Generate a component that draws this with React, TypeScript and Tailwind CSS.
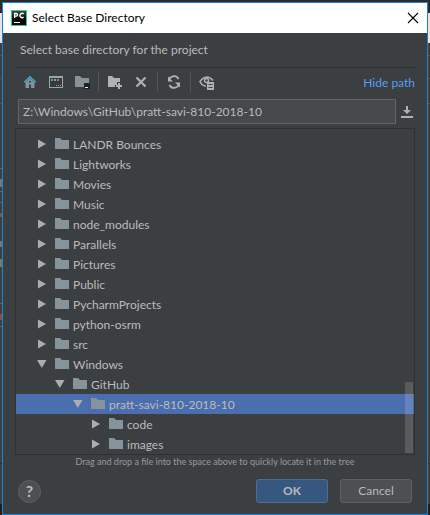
import React from "react";

type Node = { name: string; depth: number; open?: boolean; selected?: boolean };

const nodes: Node[] = [
  { name: "LANDR Bounces", depth: 0 },
  { name: "Lightworks", depth: 0 },
  { name: "Movies", depth: 0 },
  { name: "Music", depth: 0 },
  { name: "node_modules", depth: 0 },
  { name: "Parallels", depth: 0 },
  { name: "Pictures", depth: 0 },
  { name: "Public", depth: 0 },
  { name: "PycharmProjects", depth: 0 },
  { name: "python-osrm", depth: 0 },
  { name: "src", depth: 0 },
  { name: "Windows", depth: 0, open: true },
  { name: "GitHub", depth: 1, open: true },
  { name: "pratt-savi-810-2018-10", depth: 2, open: true, selected: true },
  { name: "code", depth: 3 },
  { name: "images", depth: 3 },
];

const indents = ["pl-5", "pl-[38px]", "pl-14", "pl-[74px]"];

function Folder() {
  return (
    <svg width="14" height="12" viewBox="0 0 14 12" className="mr-1 shrink-0" aria-hidden="true">
      <path d="M0 0h5l2 2h7v9H0z" fill="#87939a" />
    </svg>
  );
}

function Arrow({ open }: { open?: boolean }) {
  return (
    <svg width="10" height="10" viewBox="0 0 10 10" className="shrink-0" aria-hidden="true">
      <path d={open ? "M0 1h9.5L4.8 9z" : "M1 0.5v9L9 5z"} fill="#adadad" />
    </svg>
  );
}

function TreeRow({ node }: { node: Node }) {
  return (
    <li
      role="treeitem"
      aria-expanded={!!node.open}
      aria-selected={!!node.selected}
      className={`flex h-5 items-center ${indents[node.depth]} ${node.selected ? "bg-[#4b6eaf]" : ""}`}
    >
      <span className="mr-2 flex w-[11px] justify-center">
        <Arrow open={node.open} />
      </span>
      <Folder />
      <span className="pt-0.5 whitespace-nowrap">{node.name}</span>
    </li>
  );
}

function Tool({ label, children }: { label: string; children: React.ReactNode }) {
  return (
    <button type="button" aria-label={label} className="flex h-5 w-[26px] items-center justify-center">
      <svg width="16" height="16" viewBox="0 0 16 16" aria-hidden="true">
        {children}
      </svg>
    </button>
  );
}

function Divider() {
  return <span className="mx-[3px] h-5 w-px bg-[#555555]" />;
}

function Backdrop({ left }: { left?: boolean }) {
  return (
    <div className="flex w-0.5 shrink-0 flex-col bg-[#3c3f41]" aria-hidden="true">
      <div className="h-[13px] bg-[#2b2b2b]" />
      <div className="h-[30px] bg-[#e4e4e4]" />
      <div className="h-3" />
      <div className="h-px bg-[#555555]" />
      <div className="h-[22px]" />
      <div className="h-px bg-[#555555]" />
      <div className="h-6" />
      <div className="h-px bg-[#555555]" />
      {left && (
        <>
          <div className="h-16" />
          <div className="h-px bg-[#666666]" />
          <div className="h-2.5" />
          <div className="h-2 bg-[#777777]" />
          <div className="h-1" />
          <div className="h-px bg-[#666666]" />
          <div className="h-2.5" />
          <div className="h-px bg-[#666666]" />
          <div className="h-2.5" />
          <div className="h-1 bg-[#7a5548]" />
          <div className="h-6" />
          <div className="h-1.5 bg-[#777777]" />
          <div className="h-3" />
          <div className="h-2 bg-[#6f8068]" />
          <div className="h-9" />
          <div className="h-px bg-[#666666]" />
          <div className="h-2.5" />
          <div className="h-1.5 bg-[#7a5548]" />
          <div className="h-1.5" />
          <div className="h-px bg-[#666666]" />
        </>
      )}
      <div className="grow" />
      <div className="h-px bg-[#2b2b2b]" />
      <div className="h-10" />
      <div className="h-[11px] bg-[#1e1e1e]" />
    </div>
  );
}

export default function App() {
  return (
    <div className="flex min-h-screen bg-[#2b2b2b] font-['Lato','Noto_Sans',sans-serif] text-xs text-[#bbbbbb]">
      <Backdrop left />
      <main className="mt-0.5 flex min-w-0 grow flex-col border border-[#1883d7] bg-[#3c3f41]">
        <header className="flex h-[30px] items-center bg-white pr-2 pl-2 text-black">
          <svg width="16" height="16" viewBox="0 0 16 16" aria-hidden="true">
            <defs>
              <linearGradient id="logo" x1="0" y1="0" x2="0" y2="1">
                <stop offset="0" stopColor="#454545" />
                <stop offset="0.6" stopColor="#050505" />
              </linearGradient>
            </defs>
            <rect width="16" height="16" fill="#21d789" />
            <rect x="1" y="1" width="14" height="14" fill="url(#logo)" />
            <path d="M3.600 8V3.500h1.600a1.300 1.300 0 0 1 0 2.700H3.600M12.600 4a2.100 2.100 0 1 0 0 3" fill="none" stroke="#fff" strokeWidth="1.300" />
            <path d="M3 12h6v1H3z" fill="#fff" />
          </svg>
          <h1 className="ml-[5px] grow">Select Base Directory</h1>
          <button type="button" aria-label="Close">
            <svg width="12" height="12" viewBox="0 0 12 12" aria-hidden="true">
              <path d="M1 1l10 10M11 1L1 11" stroke="#000" strokeWidth="1.1" />
            </svg>
          </button>
        </header>

        <div className="flex grow flex-col px-3">
          <p className="flex h-[34px] items-center pl-[5px]">Select base directory for the project</p>
          <div className="h-px bg-[#2b2d2e]" />

          <div className="mt-1 flex h-5 items-center pl-0.5">
            <Tool label="Home directory">
              <path d="M8 4.200L3.500 8.500V14H7v-3.500h2V14h3.500V8.500z" fill="#87939a" />
              <path d="M2.200 8.300L8 3l5.800 5.300" fill="none" stroke="#3e9fca" strokeWidth="1.700" />
              <path d="M7 7h2v1.500H7z" fill="#3c3f41" />
            </Tool>
            <Tool label="Project directory">
              <path d="M1 2h14v12H1z" fill="#9aa7b0" />
              <path d="M2 4h12v9H2z" fill="#363a3c" />
              <path d="M3 5h2v2H3z" fill="#62b543" />
              <path d="M6 5h2v2H6z" fill="#40b6e0" />
              <path d="M9 5h2v2H9z" fill="#f26522" />
              <path d="M8 11h1v1H8zM10 11h1v1h-1zM12 11h1v1h-1z" fill="#9aa7b0" />
            </Tool>
            <Tool label="Module directory">
              <path d="M1 2h5l2 2h7v9H1z" fill="#87939a" />
              <path d="M10 9h6v6h-6z" fill="#1f2122" />
              <path d="M11 13h3v1h-3z" fill="#fff" />
            </Tool>
            <Divider />
            <Tool label="New folder">
              <path d="M1 2h4l2 2h6v4h-3v3H8v2H1z" fill="#afb1b3" />
              <path d="M11 9h2v2h2v2h-2v2h-2v-2H9v-2h2z" fill="#afb1b3" />
            </Tool>
            <Tool label="Delete">
              <path d="M3.500 3.500l9 9M12.500 3.500l-9 9" stroke="#afb1b3" strokeWidth="2.200" />
            </Tool>
            <Divider />
            <Tool label="Refresh">
              <path d="M3 7a5 5 0 0 1 9.500-2M13 9a5 5 0 0 1-9.500 2" fill="none" stroke="#afb1b3" strokeWidth="1.800" />
              <path d="M2 2.500V7.500h5zM14 13.500V8.500H9z" fill="#afb1b3" />
            </Tool>
            <Divider />
            <Tool label="Show hidden files">
              <path d="M7 12.200Q2.500 11.500 1 7.500Q7.500-1 14 6.500" fill="none" stroke="#afb1b3" strokeWidth="1.500" />
              <circle cx="7.500" cy="6.500" r="2" fill="none" stroke="#afb1b3" strokeWidth="1.500" />
              <path d="M8 8h7v8H8z" fill="#afb1b3" />
              <path d="M9.500 10.500h4M9.500 13.500h4" stroke="#3c3f41" />
            </Tool>
            <a href="#path" className="ml-auto pt-0.5 text-[#589df6]">Hide path</a>
          </div>

          <div className="mt-[7px] flex h-[25px] items-center pr-0.5 pl-[3px]">
            <input
              aria-label="Path"
              defaultValue="Z:\Windows\GitHub\pratt-savi-810-2018-10"
              className="h-[25px] min-w-0 grow border border-[#646464] bg-[#45494a] px-1 text-[#bbbbbb] outline-none"
            />
            <button type="button" aria-label="Path history" className="ml-[5px]">
              <svg width="12" height="12" viewBox="0 0 12 12" aria-hidden="true">
                <path d="M5 0h2v4h3L6 8 2 4h3zM0 10h12v2H0z" fill="#afb1b3" />
              </svg>
            </button>
          </div>

          <div className="relative mt-1 border border-[#2e3133] pt-[5px]">
            <ul role="tree" aria-label="Directories">
              {nodes.map((n) => (
                <TreeRow key={n.name} node={n} />
              ))}
            </ul>
            <div className="absolute right-px bottom-px h-[71px] w-2 bg-white/15" />
          </div>

          <p className="text-center text-[9px] leading-[14px] text-[#999999]">
            Drag and drop a file into the space above to quickly locate it in the tree
          </p>

          <footer className="mt-2.5 flex items-center pr-[3px] pb-2.5 pl-[3px]">
            <button
              type="button"
              aria-label="Help"
              className="mr-auto flex size-[23px] items-center justify-center rounded-full border border-[#5e6060] bg-[#4c5052] text-base font-bold"
            >
              ?
            </button>
            <button type="button" className="h-6 w-[72px] rounded-[3px] border border-[#4c708c] bg-[#365880] font-bold">
              OK
            </button>
            <button type="button" className="ml-3 h-6 w-[72px] rounded-[3px] border border-[#5e6060] bg-[#4c5052]">
              Cancel
            </button>
          </footer>
        </div>
      </main>
      <Backdrop />
    </div>
  );
}
